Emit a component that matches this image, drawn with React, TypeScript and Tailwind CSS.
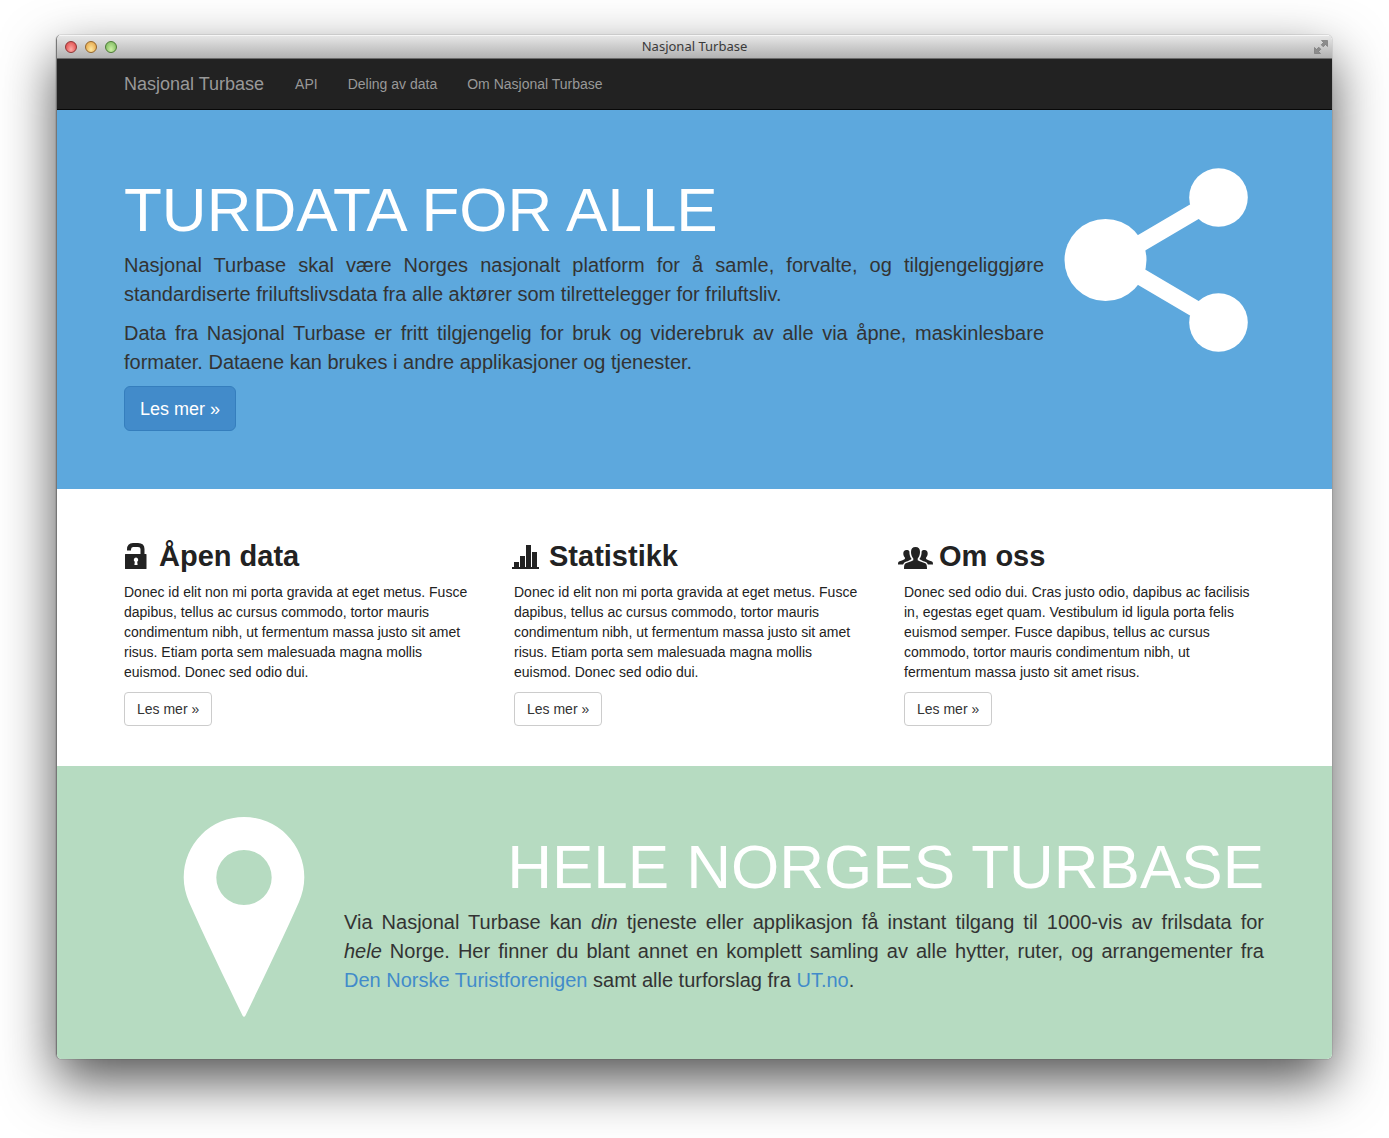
import type { ReactNode } from "react";

function Container({ children, className = "" }: { children: ReactNode; className?: string }) {
  return (
    <div className="pr-px">
      <div className={`mx-auto max-w-[1170px] px-[15px] ${className}`}>{children}</div>
    </div>
  );
}

function TitleBar() {
  return (
    <header className="grid h-6 grid-cols-[1fr_auto_1fr] items-center border-t border-b border-t-[#f6f6f6] border-b-[#6a6a6a] bg-linear-to-b from-[#e6e6e6] to-[#b2b2b2] px-2">
      <div className="flex gap-2">
        <button type="button" aria-label="Close" className="size-3 rounded-full border border-[#8f3535] bg-radial-[at_50%_75%] from-[#ffaaa5] to-[#d93d3e]" />
        <button type="button" aria-label="Minimize" className="size-3 rounded-full border border-[#94662c] bg-radial-[at_50%_75%] from-[#ffe9a0] to-[#e09a3c]" />
        <button type="button" aria-label="Zoom" className="size-3 rounded-full border border-[#4d7a35] bg-radial-[at_50%_75%] from-[#cdf0a5] to-[#72b356]" />
      </div>
      <span className="pb-0.5 font-['Noto_Sans',sans-serif] text-[13px] leading-5 text-[#3a3a3a]">Nasjonal Turbase</span>
      <button type="button" aria-label="Full screen" className="-mr-1 justify-self-end">
        <svg width="14" height="14" viewBox="0 0 14 14" fill="#8c8c8c" stroke="#707070" strokeWidth=".6">
          <path d="M7.500.500h6v6l-2-2-2.300 2.300-2-2L9.500 2.500z" />
          <path d="M6.500 13.500h-6v-6l2 2 2.300-2.300 2 2-2.300 2.300z" />
        </svg>
      </button>
    </header>
  );
}

function NavBar() {
  return (
    <nav className="border-b border-[#080808] bg-[#222] text-[#999]">
      <Container className="flex h-[50px] items-center">
        <a href="#top" className="mr-4 text-lg leading-5">Nasjonal Turbase</a>
        {["API", "Deling av data", "Om Nasjonal Turbase"].map((label) => (
          <a key={label} href="#top" className="px-[15px] text-sm leading-5">{label}</a>
        ))}
      </Container>
    </nav>
  );
}

function ShareIcon() {
  return (
    <svg className="size-[200px] shrink-0" viewBox="0 0 200 200" fill="#fff" aria-hidden="true">
      <path d="M154.500 37.500 41.500 104M154.500 162.500 41.500 96" stroke="#fff" strokeWidth="17" />
      <circle cx="41.500" cy="100" r="41" />
      <circle cx="154.500" cy="37.500" r="29.300" />
      <circle cx="154.500" cy="162.500" r="29.300" />
    </svg>
  );
}

function PinIcon() {
  return (
    <svg className="size-[200px] shrink-0" viewBox="0 0 200 200" fill="#fff" aria-hidden="true">
      <path
        fillRule="evenodd"
        d="M120 0a60.300 60.300 0 0 1 60.300 60.300c0 9-2 17-5.300 24.700C160 119 140 160 121.500 198.500Q120 201 118.500 198.500C100 160 80 119 65 85c-3.300-7.700-5.300-15.700-5.300-24.700A60.300 60.300 0 0 1 120 0Zm0 33a27.700 27.500 0 1 0 0 55 27.700 27.500 0 0 0 0-55Z"
      />
    </svg>
  );
}

function LockIcon() {
  return (
    <svg width="22" height="26" viewBox="0 0 22 26" aria-hidden="true">
      <path d="M4 7.500V6.500Q4 2 8 2H13Q17.500 2 17.500 6V12" fill="none" stroke="#222" strokeWidth="4" />
      <path fill="#222" fillRule="evenodd" d="M.500 11h20.500q.500 0 .500.500v14q0 .500-.500.500H.500q-.500 0-.500-.500v-14q0-.500.500-.500Zm10.500 3.500a2.300 2.300 0 0 0-1.200 4.200L9.400 22h3.200l-.4-3.300A2.300 2.300 0 0 0 11 14.500Z" />
    </svg>
  );
}

function ChartIcon() {
  return (
    <svg width="27" height="24" viewBox="0 0 27 24" fill="#222" aria-hidden="true">
      <path d="M0 22h27v2H0zM2 17h5v6H2zM8 11h5v12H8zM14 0h5v23h-5zM20 7h5v16h-5z" />
    </svg>
  );
}

function GroupIcon() {
  return (
    <svg width="35" height="22" viewBox="0 0 35 22" fill="#222" aria-hidden="true">
      <path d="M17.500 0c3 0 4.500 1.700 4.500 5 0 3-1 5-2.300 6.500v1.800c2.500 1.700 6 2.200 8 3.200.9.700 1.300 2 1.300 5.500H6c0-3.500.4-4.800 1.300-5.500 2-1 5.500-1.500 8-3.200v-1.800C14 10 13 8 13 5c0-3.300 1.500-5 4.500-5Z" />
      <path d="M8.500 3c1.400 0 2.400.5 2.900 1.400-.1 3.200.8 5.700 2.100 7.300l-.1.600c-2.400 1.600-5.300 2.400-7 3.200L5 17.500H0c0-1.700.2-2.500 1-3 1.700-1 4.200-1.400 5.900-2.600V10.600C5.900 9.600 5.300 8.200 5.300 6.500 5.300 4.200 6.400 3 8.500 3Z" />
      <path d="M26.500 3c-1.400 0-2.400.5-2.900 1.400.1 3.200-.8 5.700-2.100 7.300l.1.600c2.400 1.600 5.300 2.400 7 3.200l1.400 2H35c0-1.700-.2-2.500-1-3-1.700-1-4.200-1.400-5.900-2.600V10.600c1-1 1.600-2.400 1.600-4.100 0-2.300-1.100-3.500-3.200-3.500Z" />
    </svg>
  );
}

function Feature({ icon, title, children }: { icon: ReactNode; title: string; children: ReactNode }) {
  return (
    <article>
      <h2 className="flex h-[33px] items-end text-[29px] leading-8 font-bold text-[#222]">
        <span className="-ml-[6px] mr-[6px] flex w-[35px] justify-center pb-[3px]">{icon}</span>
        {title}
      </h2>
      <p className="my-[10px] pr-2 text-sm leading-5 text-[#222]">{children}</p>
      <button type="button" className="h-[34px] rounded border border-[#ccc] bg-white px-3 text-sm">
        Les mer »
      </button>
    </article>
  );
}

const donec =
  "Donec id elit non mi porta gravida at eget metus. Fusce dapibus, tellus ac cursus commodo, tortor mauris condimentum nibh, ut fermentum massa justo sit amet risus. Etiam porta sem malesuada magna mollis euismod. Donec sed odio dui.";

export default function App() {
  return (
    <div className="min-h-screen overflow-hidden bg-white pt-[35px] pr-[57px] pb-[79px] pl-[56px] font-['Liberation_Sans',Arial,sans-serif] text-[#333]">
      <div className="rounded-[5px] shadow-[0_22px_54px_rgba(0,0,0,0.68),0_0_1px_rgba(0,0,0,0.8)]">
        <div id="top" className="overflow-hidden rounded-[5px] border-l border-[#777] bg-white">
          <TitleBar />
          <NavBar />
          <main>
            <section className="bg-[#5da8dd] pt-[50px] pb-[58px]">
              <Container className="flex gap-5">
                <div className="flex-1 pt-[15px]">
                  <h1 className="mb-[7px] text-[62px] leading-[69px] text-white">TURDATA FOR ALLE</h1>
                  <p className="mb-[10px] text-justify text-xl leading-[29px]">
                    Nasjonal Turbase skal være Norges nasjonalt platform for å samle, forvalte, og tilgjengeliggjøre standardiserte friluftslivsdata fra alle aktører som tilrettelegger for friluftsliv.
                  </p>
                  <p className="mb-[9px] text-justify text-xl leading-[29px]">
                    Data fra Nasjonal Turbase er fritt tilgjengelig for bruk og viderebruk av alle via åpne, maskinlesbare formater. Dataene kan brukes i andre applikasjoner og tjenester.
                  </p>
                  <button type="button" className="h-[45px] rounded-md border border-[#357ebd] bg-[#428bca] px-[15px] text-lg text-white">
                    Les mer »
                  </button>
                </div>
                <ShareIcon />
              </Container>
            </section>
            <section className="pt-[50px] pb-10">
              <Container className="grid grid-cols-3 gap-[30px]">
                <Feature icon={<LockIcon />} title="Åpen data">{donec}</Feature>
                <Feature icon={<ChartIcon />} title="Statistikk">{donec}</Feature>
                <Feature icon={<GroupIcon />} title="Om oss">
                  Donec sed odio dui. Cras justo odio, dapibus ac facilisis in, egestas eget quam. Vestibulum id ligula porta felis euismod semper. Fusce dapibus, tellus ac cursus commodo, tortor mauris condimentum nibh, ut fermentum massa justo sit amet risus.
                </Feature>
              </Container>
            </section>
            <section className="bg-[#b6dbc1] pt-[51px] pb-[42px]">
              <Container className="flex gap-5">
                <PinIcon />
                <div className="flex-1 pt-[15px]">
                  <h1 className="mb-[7px] text-right text-[62px] leading-[69px] text-white">HELE NORGES TURBASE</h1>
                  <p className="text-justify text-xl leading-[29px]">
                    Via Nasjonal Turbase kan <em>din</em> tjeneste eller applikasjon få instant tilgang til 1000-vis av frilsdata for <em>hele</em>&nbsp;Norge. Her finner du blant annet en komplett samling av alle hytter, ruter, og arrangementer fra{" "}
                    <a href="#dnt" className="text-[#428bca]">Den&nbsp;Norske Turistforenigen</a> samt alle turforslag fra{" "}
                    <a href="#ut" className="text-[#428bca]">UT.no</a>.
                  </p>
                </div>
              </Container>
            </section>
          </main>
        </div>
      </div>
    </div>
  );
}
